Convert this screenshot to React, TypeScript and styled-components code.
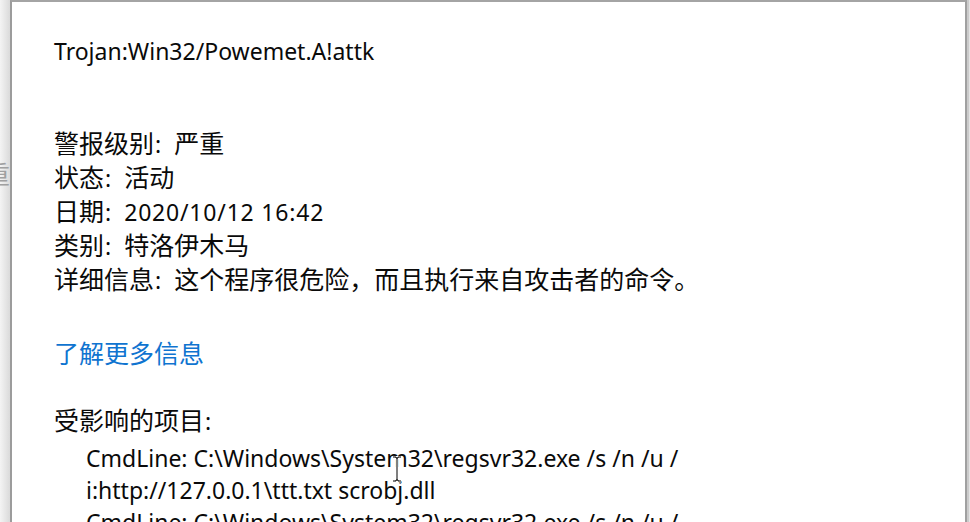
import React from "react";
import styled, { createGlobalStyle } from "styled-components";

const Global = createGlobalStyle`
  html, body { margin: 0; padding: 0; width: 970px; height: 522px; overflow: hidden; }
  body { background: #e4e4e4; font-family: "Noto Sans", "Noto Sans CJK SC", sans-serif; }
`;

const Page = styled.div`
  display: flex;
  width: 970px;
  height: 522px;
  overflow: hidden;
`;

const BackStrip = styled.div`
  width: 10px;
  flex: none;
  overflow: hidden;
  background: linear-gradient(to right, #f4f4f4, #dadada);
  padding-top: 156px;
  box-sizing: border-box;
`;

const Ghost = styled.span`
  display: block;
  margin-left: -15px;
  font-family: "Noto Sans CJK SC", sans-serif;
  font-size: 25px;
  line-height: 34px;
  color: #a0a0a0;
  white-space: nowrap;
`;

const Window = styled.div`
  flex: 1;
  background: #fff;
  border-left: 2px solid #9c9c9c;
  border-top: 2px solid #a4a4a4;
  border-right: 2px solid #a0a0a0;
  box-shadow: 2px 0 0 #cbcbcb;
  margin-right: 3px;
  padding: 32px 0 0 42px;
  box-sizing: border-box;
  position: relative;
`;

const Line = styled.div<{ $indent?: boolean; $gap?: number }>`
  font-family: "Noto Sans", "Noto Sans CJK SC", sans-serif;
  font-size: 23px;
  line-height: 34px;
  color: #0a0a0a;
  white-space: nowrap;
  padding-left: ${(p) => (p.$indent ? "32px" : "0")};
  margin-top: ${(p) => (p.$gap ? `${p.$gap}px` : "0")};
`;

const Title = styled(Line)`
  margin-bottom: 59px;
`;

const Field = styled(Line)``;

const Label = styled.span`
  font-family: "Noto Sans CJK SC", sans-serif;
  font-size: 25px;
  line-height: 1;
  &::after {
    content: ":";
    font-family: "Noto Sans", sans-serif;
    font-size: 23px;
    margin-left: 1px;
    margin-right: 13px;
  }
`;

const Value = styled.span<{ $latin?: boolean }>`
  font-family: ${(p) => (p.$latin ? `"Noto Sans", sans-serif` : `"Noto Sans CJK SC", sans-serif`)};
  font-size: ${(p) => (p.$latin ? "23px" : "25px")};
  letter-spacing: ${(p) => (p.$latin ? "0.8px" : "0")};
  line-height: 1;
`;

const Heading = styled(Line)``;

const Link = styled(Line)`
  font-family: "Noto Sans CJK SC", sans-serif;
  font-size: 25px;
  color: #0f74d0;
`;

const Cmd = styled(Line)`
  line-height: 32px;
`;

const Cursor = styled.svg`
  position: absolute;
  left: 379px;
  top: 454px;
`;

export default function App() {
  return (
    <>
      <Global />
      <Page>
        <BackStrip>
          <Ghost>重</Ghost>
        </BackStrip>
        <Window>
          <Title>Trojan:Win32/Powemet.A!attk</Title>
          <Field><Label>警报级别</Label><Value>严重</Value></Field>
          <Field><Label>状态</Label><Value>活动</Value></Field>
          <Field><Label>日期</Label><Value $latin>2020/10/12 16:42</Value></Field>
          <Field><Label>类别</Label><Value>特洛伊木马</Value></Field>
          <Field><Label>详细信息</Label><Value>这个程序很危险，而且执行来自攻击者的命令。</Value></Field>
          <Link $gap={38}>了解更多信息</Link>
          <Heading $gap={35}><Label>受影响的项目</Label></Heading>
          <Cmd $indent $gap={4}>CmdLine: C:\Windows\System32\regsvr32.exe /s /n /u /</Cmd>
          <Cmd $indent>i:http://127.0.0.1\ttt.txt scrobj.dll</Cmd>
          <Cmd $indent>CmdLine: C:\Windows\System32\regsvr32.exe /s /n /u /</Cmd>
          <Cursor width="12" height="27" viewBox="0 0 12 27">
            <path d="M2 1h3v1h2v-1h3M6 2v22M2 25h3v-1h2v1h3" stroke="#fff" strokeWidth="3" fill="none" />
            <path d="M2 1h3v1h2v-1h3M6 2v22M2 25h3v-1h2v1h3" stroke="#000" strokeWidth="1" fill="none" />
          </Cursor>
        </Window>
      </Page>
    </>
  );
}
